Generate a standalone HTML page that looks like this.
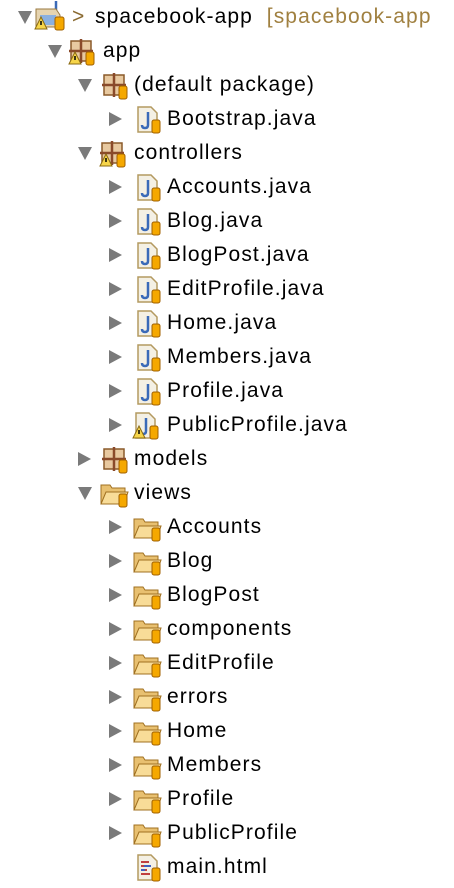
<!DOCTYPE html><html><head><style>
body{margin:0;width:454px;height:888px;background:#fff;overflow:hidden;font-family:"Liberation Sans",sans-serif;font-size:21px;color:#000}
.r{position:absolute;height:34px;line-height:34px;white-space:nowrap}
.t{position:absolute;top:0;letter-spacing:1.1px}
.a{position:absolute;width:0;height:0}
.dn{border-left:7px solid transparent;border-right:7px solid transparent;border-top:13px solid #7a7a7a;top:11px}
.rt{border-top:7px solid transparent;border-bottom:7px solid transparent;border-left:13px solid #7a7a7a;top:10px}
svg{position:absolute;top:4px}
</style></head><body>
<svg width="0" height="0" style="position:absolute">
<symbol id="pkg" viewBox="0 0 30 28"><rect x="3" y="3" width="20" height="20" fill="#e8c9a0" stroke="#8a5a2a" stroke-width="1.5"/><path d="M13 1v24M1 13h24" stroke="#8a4a2a" stroke-width="2.5"/><rect x="18" y="14" width="8" height="13" rx="2" fill="#f5a800" stroke="#a06000"/></symbol>
<symbol id="java" viewBox="0 0 30 28"><path d="M4 1h13l6 6v19H4z" fill="#f4f0e4" stroke="#b49a60" stroke-width="1.5"/><path d="M14 6v13q0 3-3 3t-3-3" stroke="#3a6ab8" stroke-width="2.5" fill="none"/><rect x="18" y="14" width="8" height="13" rx="2" fill="#f5a800" stroke="#a06000"/></symbol>
<symbol id="fold" viewBox="0 0 32 28"><path d="M2 5h9l2 3h13v16H2z" fill="#e8c070" stroke="#a07020"/><path d="M2 24l5-12h22l-4 12z" fill="#f8dc98" stroke="#a07020"/><rect x="20" y="14" width="8" height="13" rx="2" fill="#f5a800" stroke="#a06000"/></symbol>
<symbol id="warn" viewBox="0 0 30 28"><path d="M7 14l6 12H1z" fill="#f6d54a" stroke="#8a6a10"/><path d="M7 18v4" stroke="#000" stroke-width="1.5"/></symbol>
<symbol id="html" viewBox="0 0 30 28"><path d="M4 1h13l6 6v19H4z" fill="#f4f0e4" stroke="#b49a60" stroke-width="1.5"/><path d="M7 8h8M7 12h10M7 16h6M7 20h9" stroke="#c04040" stroke-width="2"/><path d="M10 12h7M7 16h4" stroke="#4060c0" stroke-width="2"/><rect x="18" y="14" width="8" height="13" rx="2" fill="#f5a800" stroke="#a06000"/></symbol>
</svg>

<div class="r" style="top:0;left:0;width:454px">
<div class="a dn" style="left:18px"></div>
<svg style="left:34px;top:1px" width="32" height="30" viewBox="0 0 32 30"><path d="M22 0v10q0 4-4 4" stroke="#3a6ab8" stroke-width="2.5" fill="none"/><path d="M2 8h20l4 6v12H2z" fill="#e6d4b0" stroke="#9a7a40"/><rect x="6" y="14" width="16" height="10" fill="#8ab0e0"/><rect x="21" y="16" width="9" height="13" rx="2" fill="#f5a800" stroke="#a06000"/><use href="#warn" x="0" y="2" width="30" height="28"/></svg>
<span class="t" style="left:72px;color:#8a6a30">&gt;</span>
<span class="t" style="left:95px">spacebook-app<span style="color:#a08040">&nbsp;&nbsp;[spacebook-app</span></span></div>

<div class="r" style="top:34px"><div class="a dn" style="left:48px"></div><svg style="left:68px" width="30" height="28"><use href="#pkg" width="30" height="28"/><use href="#warn" width="30" height="28"/></svg><span class="t" style="left:103px">app</span></div>
<div class="r" style="top:68px"><div class="a dn" style="left:78px"></div><svg style="left:101px" width="30" height="28"><use href="#pkg" width="30" height="28"/></svg><span class="t" style="left:134px">(default package)</span></div>
<div class="r" style="top:102px"><div class="a rt" style="left:109px"></div><svg style="left:134px" width="30" height="28"><use href="#java" width="30" height="28"/></svg><span class="t" style="left:167px">Bootstrap.java</span></div>
<div class="r" style="top:136px"><div class="a dn" style="left:78px"></div><svg style="left:99px" width="30" height="28"><use href="#pkg" width="30" height="28"/><use href="#warn" width="30" height="28"/></svg><span class="t" style="left:134px">controllers</span></div>
<div class="r" style="top:170px"><div class="a rt" style="left:109px"></div><svg style="left:134px" width="30" height="28"><use href="#java" width="30" height="28"/></svg><span class="t" style="left:167px">Accounts.java</span></div>
<div class="r" style="top:204px"><div class="a rt" style="left:109px"></div><svg style="left:134px" width="30" height="28"><use href="#java" width="30" height="28"/></svg><span class="t" style="left:167px">Blog.java</span></div>
<div class="r" style="top:238px"><div class="a rt" style="left:109px"></div><svg style="left:134px" width="30" height="28"><use href="#java" width="30" height="28"/></svg><span class="t" style="left:167px">BlogPost.java</span></div>
<div class="r" style="top:272px"><div class="a rt" style="left:109px"></div><svg style="left:134px" width="30" height="28"><use href="#java" width="30" height="28"/></svg><span class="t" style="left:167px">EditProfile.java</span></div>
<div class="r" style="top:306px"><div class="a rt" style="left:109px"></div><svg style="left:134px" width="30" height="28"><use href="#java" width="30" height="28"/></svg><span class="t" style="left:167px">Home.java</span></div>
<div class="r" style="top:340px"><div class="a rt" style="left:109px"></div><svg style="left:134px" width="30" height="28"><use href="#java" width="30" height="28"/></svg><span class="t" style="left:167px">Members.java</span></div>
<div class="r" style="top:374px"><div class="a rt" style="left:109px"></div><svg style="left:134px" width="30" height="28"><use href="#java" width="30" height="28"/></svg><span class="t" style="left:167px">Profile.java</span></div>
<div class="r" style="top:408px"><div class="a rt" style="left:109px"></div><svg style="left:132px" width="30" height="28"><use href="#java" width="30" height="28"/><use href="#warn" width="30" height="28"/></svg><span class="t" style="left:167px">PublicProfile.java</span></div>
<div class="r" style="top:442px"><div class="a rt" style="left:78px"></div><svg style="left:101px" width="30" height="28"><use href="#pkg" width="30" height="28"/></svg><span class="t" style="left:134px">models</span></div>
<div class="r" style="top:476px"><div class="a dn" style="left:78px"></div><svg style="left:99px" width="32" height="28"><use href="#fold" width="32" height="28"/></svg><span class="t" style="left:134px">views</span></div>
<div class="r" style="top:510px"><div class="a rt" style="left:109px"></div><svg style="left:132px" width="32" height="28"><use href="#fold" width="32" height="28"/></svg><span class="t" style="left:167px">Accounts</span></div>
<div class="r" style="top:544px"><div class="a rt" style="left:109px"></div><svg style="left:132px" width="32" height="28"><use href="#fold" width="32" height="28"/></svg><span class="t" style="left:167px">Blog</span></div>
<div class="r" style="top:578px"><div class="a rt" style="left:109px"></div><svg style="left:132px" width="32" height="28"><use href="#fold" width="32" height="28"/></svg><span class="t" style="left:167px">BlogPost</span></div>
<div class="r" style="top:612px"><div class="a rt" style="left:109px"></div><svg style="left:132px" width="32" height="28"><use href="#fold" width="32" height="28"/></svg><span class="t" style="left:167px">components</span></div>
<div class="r" style="top:646px"><div class="a rt" style="left:109px"></div><svg style="left:132px" width="32" height="28"><use href="#fold" width="32" height="28"/></svg><span class="t" style="left:167px">EditProfile</span></div>
<div class="r" style="top:680px"><div class="a rt" style="left:109px"></div><svg style="left:132px" width="32" height="28"><use href="#fold" width="32" height="28"/></svg><span class="t" style="left:167px">errors</span></div>
<div class="r" style="top:714px"><div class="a rt" style="left:109px"></div><svg style="left:132px" width="32" height="28"><use href="#fold" width="32" height="28"/></svg><span class="t" style="left:167px">Home</span></div>
<div class="r" style="top:748px"><div class="a rt" style="left:109px"></div><svg style="left:132px" width="32" height="28"><use href="#fold" width="32" height="28"/></svg><span class="t" style="left:167px">Members</span></div>
<div class="r" style="top:782px"><div class="a rt" style="left:109px"></div><svg style="left:132px" width="32" height="28"><use href="#fold" width="32" height="28"/></svg><span class="t" style="left:167px">Profile</span></div>
<div class="r" style="top:816px"><div class="a rt" style="left:109px"></div><svg style="left:132px" width="32" height="28"><use href="#fold" width="32" height="28"/></svg><span class="t" style="left:167px">PublicProfile</span></div>
<div class="r" style="top:850px"><svg style="left:134px" width="30" height="28"><use href="#html" width="30" height="28"/></svg><span class="t" style="left:167px">main.html</span></div>
</body></html>
